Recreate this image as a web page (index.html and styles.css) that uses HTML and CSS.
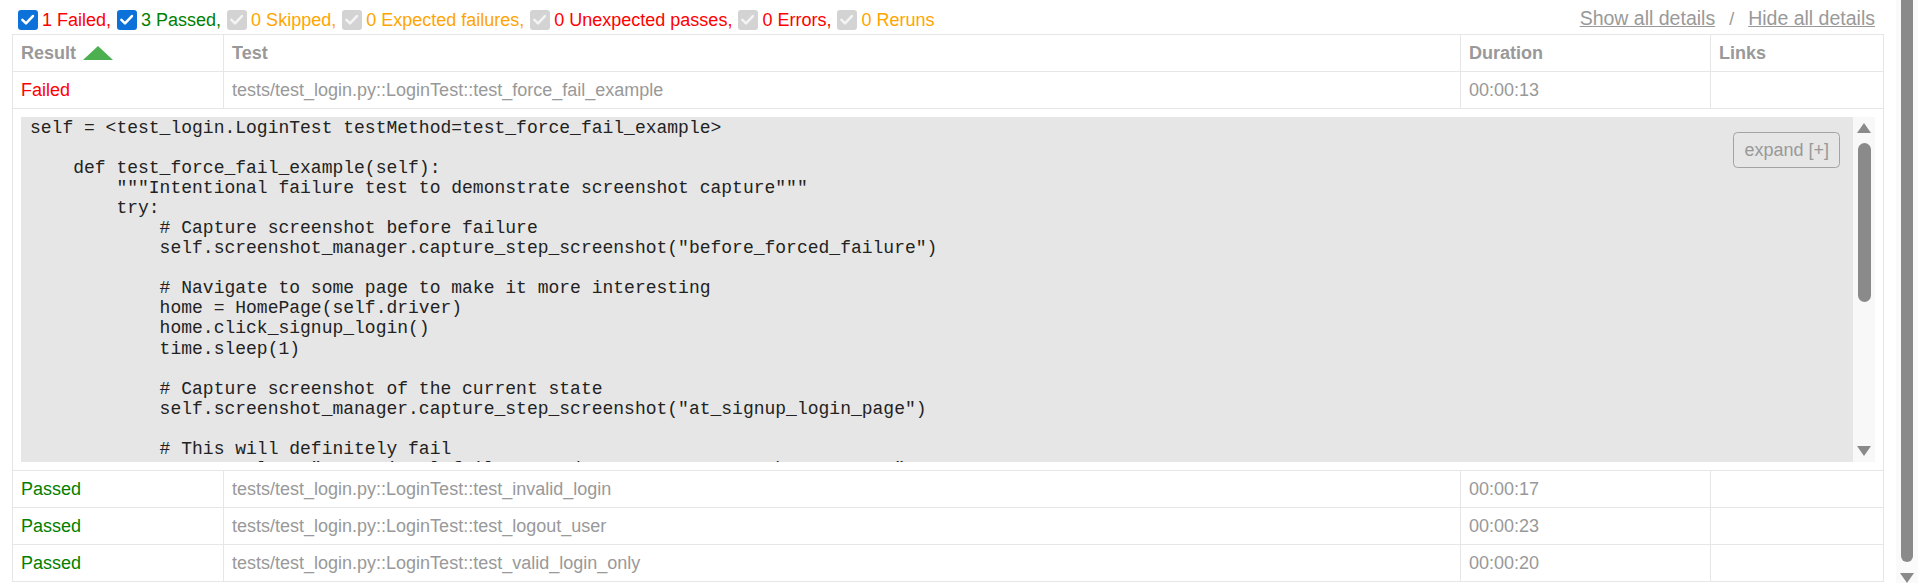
FILE: index.html
```html
<!DOCTYPE html>
<html>
<head>
<meta charset="utf-8">
<title>Test Report</title>
<link rel="stylesheet" href="styles.css">
</head>
<body>
<div class="page">
  <div class="controls">
    <div class="filters">
      <span class="cb cb-on"><svg viewBox="0 0 20 20"><path d="M4.5 10.2 L8.2 13.8 L15.3 6.2"/></svg></span><span class="failed">1 Failed,</span><span class="cb cb-on"><svg viewBox="0 0 20 20"><path d="M4.5 10.2 L8.2 13.8 L15.3 6.2"/></svg></span><span class="passed">3 Passed,</span><span class="cb cb-off"><svg viewBox="0 0 20 20"><path d="M4.5 10.2 L8.2 13.8 L15.3 6.2"/></svg></span><span class="skipped">0 Skipped,</span><span class="cb cb-off"><svg viewBox="0 0 20 20"><path d="M4.5 10.2 L8.2 13.8 L15.3 6.2"/></svg></span><span class="skipped">0 Expected failures,</span><span class="cb cb-off"><svg viewBox="0 0 20 20"><path d="M4.5 10.2 L8.2 13.8 L15.3 6.2"/></svg></span><span class="failed">0 Unexpected passes,</span><span class="cb cb-off"><svg viewBox="0 0 20 20"><path d="M4.5 10.2 L8.2 13.8 L15.3 6.2"/></svg></span><span class="failed">0 Errors,</span><span class="cb cb-off"><svg viewBox="0 0 20 20"><path d="M4.5 10.2 L8.2 13.8 L15.3 6.2"/></svg></span><span class="skipped">0 Reruns</span>
    </div>
    <div class="collapse">
      <span class="linkbtn">Show all details</span>&nbsp;/&nbsp;<span class="linkbtn">Hide all details</span>
    </div>
  </div>

  <table class="results">
    <colgroup>
      <col class="c-result">
      <col class="c-test">
      <col class="c-duration">
      <col class="c-links">
    </colgroup>
    <thead>
      <tr>
        <th><span class="sorted">Result<span class="sort-asc"></span></span></th>
        <th>Test</th>
        <th>Duration</th>
        <th>Links</th>
      </tr>
    </thead>
    <tbody>
      <tr>
        <td class="failed">Failed</td>
        <td>tests/test_login.py::LoginTest::test_force_fail_example</td>
        <td>00:00:13</td>
        <td></td>
      </tr>
      <tr>
        <td class="extra" colspan="4">
          <div class="logwrapper">
            <pre class="log">self = &lt;test_login.LoginTest testMethod=test_force_fail_example&gt;

    def test_force_fail_example(self):
        """Intentional failure test to demonstrate screenshot capture"""
        try:
            # Capture screenshot before failure
            self.screenshot_manager.capture_step_screenshot("before_forced_failure")

            # Navigate to some page to make it more interesting
            home = HomePage(self.driver)
            home.click_signup_login()
            time.sleep(1)

            # Capture screenshot of the current state
            self.screenshot_manager.capture_step_screenshot("at_signup_login_page")

            # This will definitely fail
            assert False, "Intentional failure to demonstrate screenshot capture"
        except AssertionError:
            raise
</pre>
            <div class="logscroll">
              <span class="arrow-up"></span>
              <span class="logthumb"></span>
              <span class="arrow-down"></span>
            </div>
            <div class="logexpander">expand [+]</div>
          </div>
        </td>
      </tr>
      <tr>
        <td class="passed">Passed</td>
        <td>tests/test_login.py::LoginTest::test_invalid_login</td>
        <td>00:00:17</td>
        <td></td>
      </tr>
      <tr>
        <td class="passed">Passed</td>
        <td>tests/test_login.py::LoginTest::test_logout_user</td>
        <td>00:00:23</td>
        <td></td>
      </tr>
      <tr>
        <td class="passed">Passed</td>
        <td>tests/test_login.py::LoginTest::test_valid_login_only</td>
        <td>00:00:20</td>
        <td></td>
      </tr>
    </tbody>
  </table>
</div>
<div class="pagescroll">
  <span class="pagethumb"></span>
  <span class="arrow-down page-arrow"></span>
</div>
</body>
</html>
```

FILE: styles.css
```css
html, body {
  margin: 0;
  padding: 0;
  height: 583px;
  overflow: hidden;
  background: #fff;
}

body {
  display: flex;
  font-family: "Liberation Sans", Arial, Helvetica, sans-serif;
  font-size: 18px;
  color: #999;
}

.page {
  flex: 1;
  min-width: 0;
  padding: 0 12px;
}

/* controls */
.controls {
  display: flex;
  justify-content: space-between;
  align-items: center;
  height: 34px;
  padding-top: 6px;
  box-sizing: border-box;
}

.filters {
  display: flex;
  align-items: center;
  white-space: nowrap;
  line-height: 20px;
}

.cb {
  display: inline-flex;
  width: 19.5px;
  height: 19.5px;
  margin: 0 4.5px 0 6px;
  border-radius: 3px;
  box-sizing: border-box;
}

.cb svg {
  width: 100%;
  height: 100%;
  fill: none;
  stroke-width: 2.6;
  stroke-linecap: round;
  stroke-linejoin: round;
}

.cb-on {
  background: #0c72da;
}

.cb-on svg {
  stroke: #fff;
}

.cb-off {
  background: #d3d3d3;
}

.cb-off svg {
  stroke: #f4f4f4;
}

.failed { color: #f00; }
.passed { color: #008000; }
.skipped { color: #ffa500; }

.collapse {
  white-space: nowrap;
  margin-bottom: 3px;
  line-height: 22px;
}

.linkbtn {
  padding: 0 9px;
  font-size: 19.5px;
  text-decoration: underline;
  color: #999;
}

/* table */
.results {
  width: 100%;
  table-layout: fixed;
  border-collapse: collapse;
  border: 1px solid #e6e6e6;
  color: #999;
}

.c-result { width: 211px; }
.c-duration { width: 250px; }
.c-links { width: 173px; }

.results th,
.results td {
  border: 1px solid #e6e6e6;
  padding: 8px 8px 8px 8px;
  text-align: left;
  line-height: 20px;
  height: 20px;
  white-space: nowrap;
  overflow: hidden;
}

.results th {
  font-weight: bold;
}

.sorted {
  display: inline-flex;
  align-items: center;
}

.sort-asc {
  width: 0;
  height: 0;
  margin-left: 7px;
  border-left: 15px solid transparent;
  border-right: 15px solid transparent;
  border-bottom: 14px solid #4caf50;
}

.results td.failed { color: #f00; }
.results td.passed { color: #008000; }

.results td.extra {
  height: auto;
  padding: 8px;
  overflow: visible;
}

/* log */
.logwrapper {
  position: relative;
  display: flex;
  height: 345px;
  background: #e6e6e6;
}

.log {
  flex: 1;
  min-width: 0;
  margin: 0;
  padding: 0.5px 0 0 9px;
  overflow: hidden;
  font-family: "Liberation Mono", "Courier New", monospace;
  font-size: 18px;
  line-height: 20.1px;
  color: #222;
  white-space: pre;
}

.logscroll {
  width: 22px;
  flex: none;
  background: #f8f8f8;
  display: flex;
  flex-direction: column;
  align-items: center;
  padding: 6px 0 6px;
  box-sizing: border-box;
}

.arrow-up {
  width: 0;
  height: 0;
  border-left: 7px solid transparent;
  border-right: 7px solid transparent;
  border-bottom: 10px solid #8a8a8a;
}

.arrow-down {
  width: 0;
  height: 0;
  border-left: 7px solid transparent;
  border-right: 7px solid transparent;
  border-top: 10px solid #8a8a8a;
}

.logthumb {
  width: 13px;
  height: 159px;
  margin-top: 10px;
  margin-bottom: auto;
  border-radius: 6.5px;
  background: #8a8a8a;
}

.logexpander {
  position: absolute;
  top: 15px;
  right: 35px;
  padding: 7px 10px;
  line-height: 20px;
  border: 1px solid #a3a3a3;
  border-radius: 4.5px;
  background: #e6e6e6;
  color: #999;
}

/* page scrollbar */
.pagescroll {
  width: 22px;
  flex: none;
  background: #fafafa;
  display: flex;
  flex-direction: column;
  align-items: center;
}

.pagethumb {
  width: 12px;
  height: 566px;
  background: #8a8a8a;
  border-radius: 0 0 6px 6px;
}

.page-arrow {
  margin-top: 11px;
}
```
